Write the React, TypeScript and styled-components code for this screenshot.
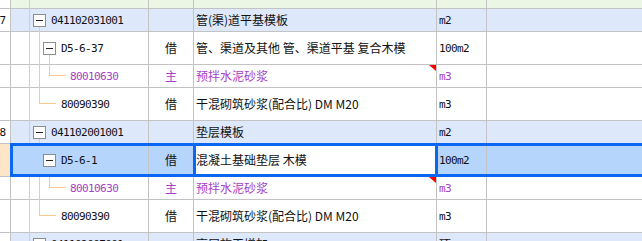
import styled, { createGlobalStyle, css } from "styled-components";

const colors = {
     grid: "#c3c3c3",
     groupBg: "#dde8fb",
     topBg: "#ebf6e4",
     selectedBg: "#b6d5fc",
     selectedNum: "#fde6c8",
     outline: "#0b66f2",
     branch: "#f8c98a",
     purple: "#a63fc4",
     text: "#111111",
};

const mono = `"DejaVu Sans Mono", "Liberation Mono", monospace`;
const cjk = `"Noto Sans CJK SC", "Noto Sans", sans-serif`;

const GlobalStyle = createGlobalStyle`
     html, body {
          margin: 0;
          padding: 0;
          background: #ffffff;
          overflow: hidden;
     }
     body {
          font-family: ${cjk};
          font-size: 12px;
          color: ${colors.text};
     }
`;

type Kind = "top" | "group" | "quota" | "main" | "last";

interface RowData {
     kind: Kind;
     num?: string;
     code?: string;
     dir?: string;
     name?: string;
     unit?: string;
     selected?: boolean;
}

const heights: Record<Kind, number> = {
     top: 8,
     group: 22,
     quota: 32,
     main: 22,
     last: 32,
};

// where the code text starts inside the tree cell
const indents: Record<Kind, number> = {
     top: 0,
     group: 22,
     quota: 32,
     main: 59,
     last: 50,
};

const rows: RowData[] = [
     { kind: "top" },
     { kind: "group", num: "7", code: "041102031001", name: "管(渠)道平基模板", unit: "m2" },
     { kind: "quota", dir: "借", code: "D5-6-37", name: "管、渠道及其他 管、渠道平基 复合木模", unit: "100m2" },
     { kind: "main", dir: "主", code: "80010630", name: "预拌水泥砂浆", unit: "m3" },
     { kind: "last", dir: "借", code: "80090390", name: "干混砌筑砂浆(配合比) DM M20", unit: "m3" },
     { kind: "group", num: "8", code: "041102001001", name: "垫层模板", unit: "m2" },
     { kind: "quota", dir: "借", code: "D5-6-1", name: "混凝土基础垫层 木模", unit: "100m2", selected: true },
     { kind: "main", dir: "主", code: "80010630", name: "预拌水泥砂浆", unit: "m3" },
     { kind: "last", dir: "借", code: "80090390", name: "干混砌筑砂浆(配合比) DM M20", unit: "m3" },
     { kind: "group", code: "041102007001", name: "高层施工增加", unit: "项" },
];

const Sheet = styled.div`
     width: 642px;
     line-height: 1;
`;

const StyledRow = styled.div<{ $h: number; $kind: Kind; $selected?: boolean }>`
     position: relative;
     display: grid;
     grid-template-columns: 11px 138px 45px 243px 50px 1fr;
     height: ${(p) => p.$h + 1}px;
     box-sizing: border-box;
     border-bottom: 1px solid ${colors.grid};
     background: #ffffff;
     ${(p) =>
          p.$kind === "top" &&
          css`
               background: ${colors.topBg};
          `}
     ${(p) =>
          p.$kind === "group" &&
          css`
               background: ${colors.groupBg};
          `}
     ${(p) =>
          p.$selected &&
          css`
               background: ${colors.selectedBg};
          `}
`;

const Cell = styled.div`
     position: relative;
     display: flex;
     align-items: center;
     box-sizing: border-box;
     border-right: 1px solid ${colors.grid};
     white-space: nowrap;
     min-width: 0;
`;

const NumCell = styled(Cell)<{ $selected?: boolean }>`
     justify-content: flex-end;
     padding-right: 4px;
     overflow: hidden;
     background: ${(p) => (p.$selected ? colors.selectedNum : "#ffffff")};
     font-family: ${mono};
     font-size: 11px;
`;

const TreeCell = styled(Cell)<{ $indent: number }>`
     padding-left: ${(p) => p.$indent}px;
`;

const Branches = styled.svg`
     position: absolute;
     left: 0;
     top: 0;
     width: 100%;
     height: calc(100% + 1px);
     overflow: visible;
     shape-rendering: crispEdges;
`;

const Toggle = styled.span`
     position: relative;
     flex: none;
     width: 13px;
     height: 13px;
     box-sizing: border-box;
     margin-right: 5px;
     border: 1px solid #8c8c8c;
     background: #ffffff;
     &::after {
          content: "";
          position: absolute;
          left: 2px;
          top: 5px;
          width: 7px;
          height: 1px;
          background: #222222;
     }
`;

const Code = styled.span<{ $purple?: boolean }>`
     position: relative;
     font-family: ${mono};
     font-size: 11px;
     letter-spacing: -0.6px;
     color: ${(p) => (p.$purple ? colors.purple : colors.text)};
`;

const DirCell = styled(Cell)<{ $purple?: boolean }>`
     justify-content: center;
     color: ${(p) => (p.$purple ? colors.purple : colors.text)};
`;

const NameCell = styled(Cell)<{ $purple?: boolean; $active?: boolean; $flag?: boolean }>`
     padding-left: 2px;
     color: ${(p) => (p.$purple ? colors.purple : colors.text)};
     ${(p) =>
          p.$active &&
          css`
               background: #ffffff;
          `}
     ${(p) =>
          p.$flag &&
          css`
               &::after {
                    content: "";
                    position: absolute;
                    top: 0;
                    right: 0;
                    width: 0;
                    height: 0;
                    border-top: 6px solid #ff0000;
                    border-left: 7px solid transparent;
               }
          `}
`;

const UnitCell = styled(Cell)<{ $purple?: boolean; $cjk?: boolean }>`
     padding-left: 2px;
     font-family: ${(p) => (p.$cjk ? cjk : mono)};
     font-size: ${(p) => (p.$cjk ? 12 : 11)}px;
     letter-spacing: ${(p) => (p.$cjk ? 0 : -0.6)}px;
     color: ${(p) => (p.$purple ? colors.purple : colors.text)};
`;

const RestCell = styled(Cell)`
     border-right: none;
`;

const RowOutline = styled.div`
     position: absolute;
     left: 10px;
     right: -3px;
     top: -1px;
     bottom: -1px;
     border: 3px solid ${colors.outline};
     pointer-events: none;
     z-index: 2;
`;

const CellOutline = styled.div`
     position: absolute;
     left: -1px;
     right: -2px;
     top: -1px;
     bottom: -1px;
     border-left: 3px solid ${colors.outline};
     border-right: 3px solid ${colors.outline};
     pointer-events: none;
     z-index: 3;
`;

// x positions of the three branch levels inside the tree cell
const A = 18.5;
const B = 28.5;
const C = 38.5;

const BranchLines = ({ kind, h }: { kind: Kind; h: number }) => {
     const H = h + 1;
     const mid = h / 2;
     const c = colors.branch;
     return (
          <Branches>
               <line x1={A} y1={0} x2={A} y2={H} stroke={c} />
               {kind === "group" && <line x1={B} y1={mid} x2={B} y2={H} stroke={c} />}
               {kind === "quota" && (
                    <>
                         <line x1={B} y1={0} x2={B} y2={H} stroke={c} />
                         <line x1={C} y1={mid} x2={C} y2={H} stroke={c} />
                    </>
               )}
               {kind === "main" && (
                    <>
                         <line x1={B} y1={0} x2={B} y2={H} stroke={c} />
                         <line x1={C} y1={0} x2={C} y2={10.5} stroke={c} />
                         <line x1={C} y1={10.5} x2={55} y2={10.5} stroke={c} />
                    </>
               )}
               {kind === "last" && (
                    <>
                         <line x1={B} y1={0} x2={B} y2={15.5} stroke={c} />
                         <line x1={B} y1={15.5} x2={45} y2={15.5} stroke={c} />
                    </>
               )}
          </Branches>
     );
};

const Row = ({ row }: { row: RowData }) => {
     const h = heights[row.kind];
     const purple = row.kind === "main";
     const hasToggle = row.kind === "group" || row.kind === "quota";
     return (
          <StyledRow $h={h} $kind={row.kind} $selected={row.selected}>
               <NumCell $selected={row.selected}>{row.num}</NumCell>
               <TreeCell $indent={indents[row.kind]}>
                    <BranchLines kind={row.kind} h={h} />
                    {hasToggle && <Toggle />}
                    {row.code && <Code $purple={purple}>{row.code}</Code>}
               </TreeCell>
               <DirCell $purple={purple}>{row.dir}</DirCell>
               <NameCell $purple={purple} $active={row.selected} $flag={purple}>
                    {row.name}
                    {row.selected && <CellOutline />}
               </NameCell>
               <UnitCell $purple={purple} $cjk={row.unit === "项"}>
                    {row.unit}
               </UnitCell>
               <RestCell />
               {row.selected && <RowOutline />}
          </StyledRow>
     );
};

export default () => {
     return (
          <>
               <GlobalStyle />
               <Sheet>
                    {rows.map((row, i) => (
                         <Row key={i} row={row} />
                    ))}
               </Sheet>
          </>
     );
};
